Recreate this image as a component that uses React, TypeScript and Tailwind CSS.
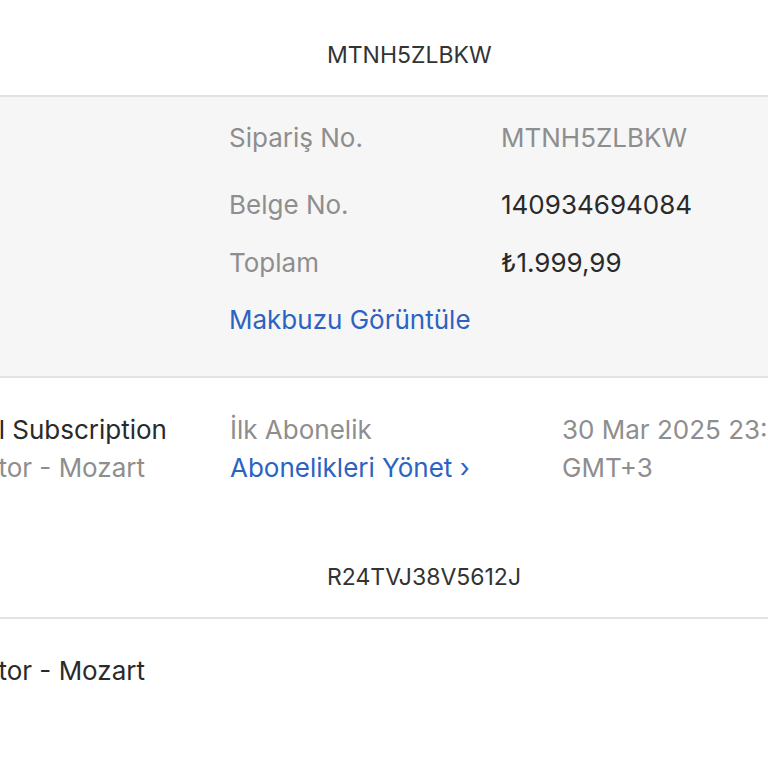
import React from "react";

const font = { fontFamily: "Inter, 'Noto Sans', sans-serif" };

export default function App() {
  return (
    <div
      className="w-[768px] h-[768px] overflow-hidden bg-white text-[#2a2a2a]"
      style={font}
    >
      {/* header 1 */}
      <div className="h-[95px] pt-[41px] pl-[327px] text-[23px] leading-[28px] text-[#333333] whitespace-nowrap">
        MTNH5ZLBKW
      </div>
      <div className="h-[2px] bg-[#e2e2e2]" />

      {/* summary panel */}
      <div className="h-[279px] bg-[#f6f6f6] pl-[229px] pt-[25px] text-[26px] leading-[32px] whitespace-nowrap">
        <div className="flex mb-[35px]">
          <div className="w-[272px] text-[#8e8e8e]">Sipariş No.</div>
          <div className="text-[#8e8e8e]">MTNH5ZLBKW</div>
        </div>
        <div className="flex mb-[26px]">
          <div className="w-[272px] text-[#8e8e8e]">Belge No.</div>
          <div className="text-[#2a2a2a]">140934694084</div>
        </div>
        <div className="flex mb-[25px]">
          <div className="w-[272px] text-[#8e8e8e]">Toplam</div>
          <div className="text-[#2a2a2a]">₺1.999,99</div>
        </div>
        <div className="flex">
          <div className="text-[#2c63c2]">Makbuzu Görüntüle</div>
        </div>
      </div>
      <div className="h-[2px] bg-[#e2e2e2]" />

      {/* item row */}
      <div className="flex pt-[33px] text-[26px] leading-[38px] whitespace-nowrap">
        <div className="w-[230px] shrink-0 overflow-hidden flex flex-col">
          <div className="text-[#2a2a2a] -ml-[80px]">Annual Subscription</div>
          <div className="text-[#8e8e8e] -ml-[60px]">Notator - Mozart</div>
        </div>
        <div className="w-[332px] shrink-0 flex flex-col">
          <div className="text-[#8e8e8e]">İlk Abonelik</div>
          <div className="text-[#2c63c2]">Abonelikleri Yönet ›</div>
        </div>
        <div className="flex-1 flex flex-col text-[#8e8e8e]">
          <div>30 Mar 2025 23:41</div>
          <div>GMT+3</div>
        </div>
      </div>

      {/* header 2 */}
      <div className="pt-[76px] h-[130px] pl-[327px] text-[23px] leading-[28px] text-[#333333] whitespace-nowrap">
        R24TVJ38V5612J
      </div>
      <div className="h-[2px] bg-[#e2e2e2]" />

      <div className="pt-[33px] text-[26px] leading-[38px] whitespace-nowrap">
        <div className="text-[#2a2a2a] -ml-[60px]">Notator - Mozart</div>
      </div>
    </div>
  );
}
